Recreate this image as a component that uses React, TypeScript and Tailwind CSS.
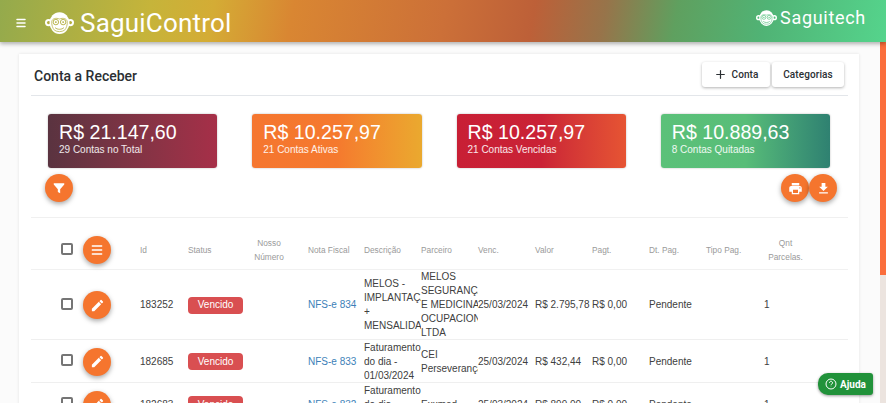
import { Plus, Menu } from "lucide-react";

const HEAD = "font-['Liberation_Sans',sans-serif]";

const totals = [
  { value: "R$ 21.147,60", label: "29 Contas no Total", bg: "bg-gradient-to-r from-[#5a3340] to-[#a62f48]" },
  { value: "R$ 10.257,97", label: "21 Contas Ativas", bg: "bg-gradient-to-r from-[#f5762f] via-[#f5792e] to-[#eaa92f]" },
  { value: "R$ 10.257,97", label: "21 Contas Vencidas", bg: "bg-gradient-to-r from-[#c81f35] via-[#ca2236] to-[#e65433]" },
  { value: "R$ 10.889,63", label: "8 Contas Quitadas", bg: "bg-gradient-to-r from-[#5bc179] via-[#58bd78] to-[#2f8171]" },
];

const rows = [
  {
    id: "183252",
    nota: "NFS-e 834",
    desc: ["MELOS -", "IMPLANTAÇÃO", "+", "MENSALIDADE"],
    parceiro: ["MELOS", "SEGURANÇA", "E MEDICINA", "OCUPACIONAL", "LTDA"],
    venc: "25/03/2024",
    valor: "R$ 2.795,78",
    height: "h-[70px]",
  },
  {
    id: "182685",
    nota: "NFS-e 833",
    desc: ["Faturamento", "do dia -", "01/03/2024"],
    parceiro: ["CEI", "Perseverança"],
    venc: "25/03/2024",
    valor: "R$ 432,44",
    height: "h-[43px]",
  },
  {
    id: "182683",
    nota: "NFS-e 832",
    desc: ["Faturamento", "do dia -", "01/03/2024"],
    parceiro: ["Exxmed"],
    venc: "25/03/2024",
    valor: "R$ 899,00",
    height: "h-[43px]",
  },
];

const COLS = "grid grid-cols-[52px_57px_48px_60px_60px_56px_57px_57px_57px_57px_57px_57px_57px_85px]";

function Fab({ children }: { children: React.ReactNode }) {
  return (
    <button className="flex h-[28px] w-[28px] shrink-0 items-center justify-center rounded-full bg-[#f5752e] text-white shadow-[0_2px_5px_rgba(0,0,0,0.35)]">
      {children}
    </button>
  );
}

function Check() {
  return <span className="-mt-[3px] ml-[30px] block h-[12px] w-[12px] rounded-[2px] border-2 border-[#757575] bg-white" />;
}

function PencilIcon() {
  return (
    <svg viewBox="0 0 24 24" className="h-[15px] w-[15px] fill-current">
      <path d="M3 17.25V21h3.75L17.81 9.94l-3.75-3.75L3 17.25zM20.71 7.04a1 1 0 0 0 0-1.41l-2.34-2.34a1 1 0 0 0-1.41 0l-1.83 1.83 3.75 3.75 1.83-1.83z" />
    </svg>
  );
}

function MonkeyLogo({ className, ink }: { className: string; ink: string }) {
  return (
    <svg viewBox="0 0 32 24" className={className}>
      <circle cx="4" cy="11.5" r="4" fill="white" />
      <circle cx="28" cy="11.5" r="4" fill="white" />
      <circle cx="4" cy="11.5" r="1.8" fill={ink} />
      <circle cx="28" cy="11.5" r="1.8" fill={ink} />
      <ellipse cx="16" cy="12" rx="11" ry="12" fill="white" />
      <path d="M7.5 10c1-3 4.5-4 8.5-2.4C20 6 23.500 7 24.500 10c.5 4-1 8-3 10-3 2-8 2-11 0-2-2-3.500-6-3-10z" fill="none" stroke={ink} strokeWidth="0.8" />
      <circle cx="12" cy="11" r="3" fill="none" stroke={ink} strokeWidth="1" />
      <circle cx="20" cy="11" r="3" fill="none" stroke={ink} strokeWidth="1" />
      <circle cx="12" cy="11" r="1" fill={ink} />
      <circle cx="20" cy="11" r="1" fill={ink} />
      <path d="M11.500 17.500c2.500 2 6.500 2 9 0" fill="none" stroke={ink} strokeWidth="1" strokeLinecap="round" />
    </svg>
  );
}

export default function App() {
  return (
    <div className={`relative h-[403px] overflow-hidden bg-[#fbfbfb] ${HEAD}`}>
      {/* Top bar */}
      <header className="relative z-10 flex h-[42px] items-center bg-[linear-gradient(100deg,#94aa4c_0%,#c6b43a_17%,#d4ac35_24%,#d98632_33%,#cc7038_50%,#bd6038_60%,#97744a_68%,#5fa05f_76%,#50b375_86%,#55d48c_100%)] pl-[15px] pr-[20px] shadow-[0_2px_4px_rgba(0,0,0,0.3)]">
        <Menu className="mt-[4px] h-[12px] w-[12px] text-white" strokeWidth={3} />
        <MonkeyLogo ink="#b3ad3d" className="ml-[18px] mt-[3px] h-[22px] w-[29px]" />
        <span className="ml-[6px] mt-[3px] font-['Roboto',sans-serif] text-[26px] font-normal leading-none tracking-[0.2px] text-white">
          SaguiControl
        </span>
        <div className="-mt-[6px] ml-auto flex items-center">
          <MonkeyLogo ink="#52bf7c" className="h-[16px] w-[21px]" />
          <span className="ml-[3px] font-['Roboto',sans-serif] text-[18px] font-normal leading-none tracking-[0.7px] text-white">
            Saguitech
          </span>
        </div>
      </header>

      <div className="flex">
        {/* Main card */}
        <main className="ml-[19px] mt-[12px] h-[400px] w-[840px] bg-white pl-[12px] pr-[11px] shadow-[0_0_3px_rgba(0,0,0,0.1)]">
          <div className="flex h-[42px] items-center justify-between border-b border-[#e3e6ea]">
            <h1 className="pl-[3px] pt-[3px] font-['Roboto',sans-serif] text-[14px] font-medium text-[#2b2f33]">Conta a Receber</h1>
            <div className="mr-[4px] flex gap-[2px] font-['Roboto',sans-serif] text-[10px] font-medium tracking-[0.1px] text-[#2b2f33]">
              <button className="flex h-[25px] w-[68px] items-center justify-center gap-[5px] rounded-[3px] bg-white shadow-[0_1px_3px_rgba(0,0,0,0.3)]">
                <Plus className="h-[13px] w-[13px]" strokeWidth={2.2} />
                Conta
              </button>
              <button className="flex h-[25px] w-[72px] items-center justify-center rounded-[3px] bg-white shadow-[0_1px_3px_rgba(0,0,0,0.3)]">
                Categorias
              </button>
            </div>
          </div>

          {/* Totals */}
          <div className="mt-[18px] grid grid-cols-4 gap-[35px] pl-[17px] pr-[18px]">
            {totals.map((t) => (
              <div key={t.label} className={`flex h-[54px] flex-col rounded-[3px] pl-[11px] pt-[7px] text-white shadow-[0_0_2px_rgba(0,0,0,0.3)] ${t.bg}`}>
                <span className="text-[19.6px] leading-[23px]">{t.value}</span>
                <span className="text-[10px] leading-[12px] text-white/90">{t.label}</span>
              </div>
            ))}
          </div>

          {/* Table actions */}
          <div className="mt-[6px] flex justify-between border-b border-[#f0f0f0] pb-[15px] pl-[14px] pr-[11px]">
            <Fab>
              <svg viewBox="0 0 24 24" className="h-[14px] w-[14px] fill-current">
                <path d="M3 4h18v2.2l-7 8V21l-4-2v-4.800l-7-8z" />
              </svg>
            </Fab>
            <div className="flex">
              <Fab>
                <svg viewBox="0 0 24 24" className="h-[15px] w-[15px] fill-current">
                  <path d="M19 8H5c-1.66 0-3 1.34-3 3v6h4v4h12v-4h4v-6c0-1.66-1.34-3-3-3zm-3 11H8v-5h8v5zm3-7a1 1 0 1 1 0-2 1 1 0 0 1 0 2zm-1-9H6v4h12V3z" />
                </svg>
              </Fab>
              <Fab>
                <svg viewBox="0 0 24 24" className="h-[15px] w-[15px] fill-current">
                  <path d="M19 9h-4V3H9v6H5l7 7 7-7zM5 18v2h14v-2H5z" />
                </svg>
              </Fab>
            </div>
          </div>

          {/* Table */}
          <div className={`${COLS} mt-[6px] h-[46px] items-center border-b border-[#f1f1f1] pt-[7px] text-[8.3px] leading-[14px] text-[#9a9a9a]`}>
            <Check />
            <span><Fab><Menu className="h-[14px] w-[14px]" strokeWidth={2.5} /></Fab></span>
            <span>Id</span>
            <span>Status</span>
            <span className="pr-[18px] text-center">Nosso<br />Número</span>
            <span>Nota Fiscal</span>
            <span>Descrição</span>
            <span>Parceiro</span>
            <span>Venc.</span>
            <span>Valor</span>
            <span>Pagt.</span>
            <span>Dt. Pag.</span>
            <span>Tipo Pag.</span>
            <span className="pr-[40px] text-center">Qnt<br />Parcelas.</span>
          </div>

          {rows.map((r) => (
            <div key={r.id} className={`${COLS} ${r.height} items-center border-b border-[#efefef] pt-[1px] text-[10px] leading-[14px] text-[#404040]`}>
              <Check />
              <span><Fab><PencilIcon /></Fab></span>
              <span>{r.id}</span>
              <span>
                <span className="flex h-[17px] w-[55px] items-center justify-center rounded-[4px] bg-[#d94f51] text-white">Vencido</span>
              </span>
              <span />
              <span className="text-[#3d7fb8]">{r.nota}</span>
              <span className="overflow-hidden whitespace-nowrap">{r.desc.map((l) => <div key={l}>{l}</div>)}</span>
              <span className="overflow-hidden whitespace-nowrap">{r.parceiro.map((l) => <div key={l}>{l}</div>)}</span>
              <span>{r.venc}</span>
              <span className="whitespace-nowrap">{r.valor}</span>
              <span>R$ 0,00</span>
              <span>Pendente</span>
              <span />
              <span className="pl-[1px]">1</span>
            </div>
          ))}
        </main>

        {/* Scrollbar */}
        <div className="ml-auto h-[361px] w-[6px] bg-[#ece4df]">
          <div className="h-[233px] w-full bg-[#fb6e3c]" />
        </div>
      </div>

      {/* Help button */}
      <button className="absolute left-[818px] top-[373px] flex h-[22px] w-[55px] items-center justify-center gap-[3px] rounded-l-[10px] rounded-r-[3px] bg-[#21923a] font-['Roboto',sans-serif] text-[10px] font-bold text-white shadow-[0_1px_3px_rgba(0,0,0,0.4)]">
        <svg viewBox="0 0 24 24" className="h-[12px] w-[12px] fill-none stroke-white" strokeWidth="2">
          <circle cx="12" cy="12" r="10" />
          <path d="M9 9.500a3 3 0 1 1 4.500 2.600c-1 .6-1.500 1.200-1.500 2.400M12 17.500v.5" />
        </svg>
        Ajuda
      </button>
    </div>
  );
}
